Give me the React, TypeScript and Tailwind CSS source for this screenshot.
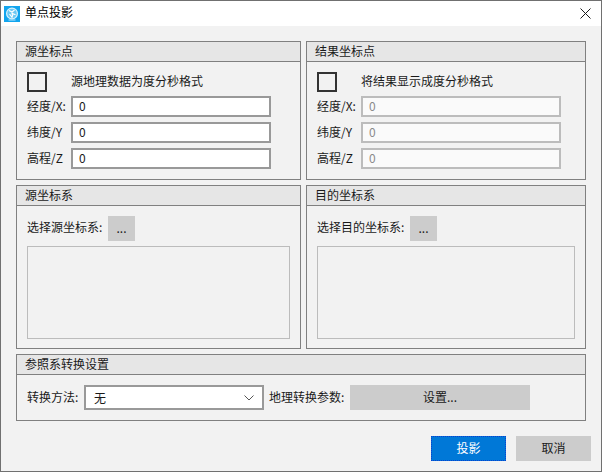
const font = "font-['Microsoft_YaHei','Noto_Sans_CJK_SC',sans-serif]";

const Group: React.FC<{ title: string, className?: string, children: React.ReactNode }> = ({ title, className, children }) => {
  return (
    <div className={`${className} flex flex-col border border-[#808080]`}>
      <div className="h-[20px] shrink-0 border-b border-[#808080] bg-[#e6e6e6] pl-[8px] text-[12px] leading-[17px] text-[#1a1a1a]">{title}</div>
      <div className="relative flex grow flex-col pl-[10px]">{children}</div>
    </div>
  );
}

const CoordRow: React.FC<{ label: string, disabled?: boolean }> = ({ label, disabled }) => {
  return (
    <div className="flex h-[21px] items-center">
      <span className="w-[44px] pb-[2px] text-[12px] text-[#1a1a1a]">{label}</span>
      <div className={`flex h-[21px] w-[200px] items-center border-2 pb-[2px] pl-[6px] text-[12px] ${disabled ? "border-[#bcbcbc] bg-[#fafafa] text-[#8a8a8a]" : "border-[#999999] bg-white text-[#1a1a1a]"}`}>0</div>
    </div>
  );
}

const CoordGroup: React.FC<{ title: string, check: string, disabled?: boolean, className?: string }> = ({ title, check, disabled, className }) => {
  return (
    <Group title={title} className={className}>
      <div className="mt-[10px] flex h-[20px] items-center">
        <div className="h-[20px] w-[20px] border-2 border-[#333333] bg-[#f2f2f2]"></div>
        <span className="ml-[24px] pb-[3px] text-[12px] text-[#1a1a1a]">{check}</span>
      </div>
      <div className="mt-[4px] flex flex-col gap-[5px]">
        <CoordRow label="经度/X:" disabled={disabled} />
        <CoordRow label="纬度/Y" disabled={disabled} />
        <CoordRow label="高程/Z" disabled={disabled} />
      </div>
    </Group>
  );
}

const CrsGroup: React.FC<{ title: string, label: string, labelWidth: string, boxWidth: string, className?: string }> = ({ title, label, labelWidth, boxWidth, className }) => {
  return (
    <Group title={title} className={className}>
      <div className="mt-[10px] flex h-[25px] items-center">
        <span className={`${labelWidth} whitespace-nowrap pb-[3px] text-[12px] text-[#1a1a1a]`}>{label}</span>
        <div className="flex h-[25px] w-[27px] items-center justify-center pb-[2px] bg-[#cccccc] text-[12px] text-[#1a1a1a]">...</div>
      </div>
      <div className={`${boxWidth} mt-[5px] h-[93px] border border-[#bcbcbc]`}></div>
    </Group>
  );
}

const Logo = () => {
  return (
    <svg width="16" height="16" viewBox="0 0 16 16" className="shrink-0">
      <rect width="16" height="16" fill="#12a5ee" />
      <circle cx="8" cy="7.5" r="5.4" fill="#6cc8f3" stroke="#d9f2fd" strokeWidth="1.2" />
      <path d="M5 4.5l3 1.5 2.5-2M5.5 8l2.5 3.2 1-3.4 2.5 1M8 6v2.5" fill="none" stroke="#ffffff" strokeWidth="1.1" />
      <path d="M4.5 14h7" stroke="#bfe8fb" strokeWidth="1" />
    </svg>
  );
}

export default function App() {
  return (
    <div className={`${font} flex h-[472px] w-[602px] flex-col overflow-hidden border border-[#707070] bg-[#f2f2f2]`}>
      <div className="flex h-[25px] shrink-0 items-center bg-white pl-[3px] pr-[10px]">
        <Logo />
        <span className="ml-[5px] pb-[4px] text-[12px] text-black">单点投影</span>
        <svg width="11" height="11" viewBox="0 0 11 11" className="ml-auto">
          <path d="M.5.5l10 10M10.5.5l-10 10" stroke="#1a1a1a" strokeWidth="1" fill="none" />
        </svg>
      </div>

      <div className="flex grow flex-col pl-[15px] pt-[15px]">
        <div className="flex h-[139px] gap-[5px]">
          <CoordGroup className="w-[285px]" title="源坐标点" check="源地理数据为度分秒格式" />
          <CoordGroup className="w-[280px]" title="结果坐标点" check="将结果显示成度分秒格式" disabled />
        </div>

        <div className="mt-[5px] flex h-[164px] gap-[5px]">
          <CrsGroup className="w-[285px]" title="源坐标系" label="选择源坐标系:" labelWidth="w-[81px]" boxWidth="w-[263px]" />
          <CrsGroup className="w-[280px]" title="目的坐标系" label="选择目的坐标系:" labelWidth="w-[93px]" boxWidth="w-[258px]" />
        </div>

        <Group className="mt-[5px] h-[67px] w-[570px]" title="参照系转换设置">
          <div className="mt-[10px] flex h-[25px] items-center">
            <span className="w-[57px] pb-[2px] text-[12px] text-[#1a1a1a]">转换方法:</span>
            <div className="flex h-[25px] w-[180px] items-center border-2 border-[#999999] bg-white pl-[8px] pr-[8px] text-[12px] text-[#1a1a1a]">
              <span>无</span>
              <svg width="10" height="6" viewBox="0 0 10 6" className="ml-auto">
                <path d="M.5.5L5 5 9.5.5" stroke="#555555" strokeWidth="1" fill="none" />
              </svg>
            </div>
            <span className="ml-[5px] w-[81px] pb-[2px] text-[12px] text-[#1a1a1a]">地理转换参数:</span>
            <div className="flex h-[25px] w-[180px] items-center justify-center bg-[#cccccc] pb-[2px] text-[12px] text-[#1a1a1a]">设置...</div>
          </div>
        </Group>

        <div className="mt-[15px] flex gap-[10px] pl-[415px]">
          <div className="flex h-[25px] w-[75px] items-center justify-center border border-dotted border-[#0a3fd0] bg-[#0078d7] pb-[2px] text-[12px] text-white">投影</div>
          <div className="flex h-[25px] w-[75px] items-center justify-center bg-[#cccccc] pb-[2px] text-[12px] text-[#1a1a1a]">取消</div>
        </div>
      </div>
    </div>
  );
}
